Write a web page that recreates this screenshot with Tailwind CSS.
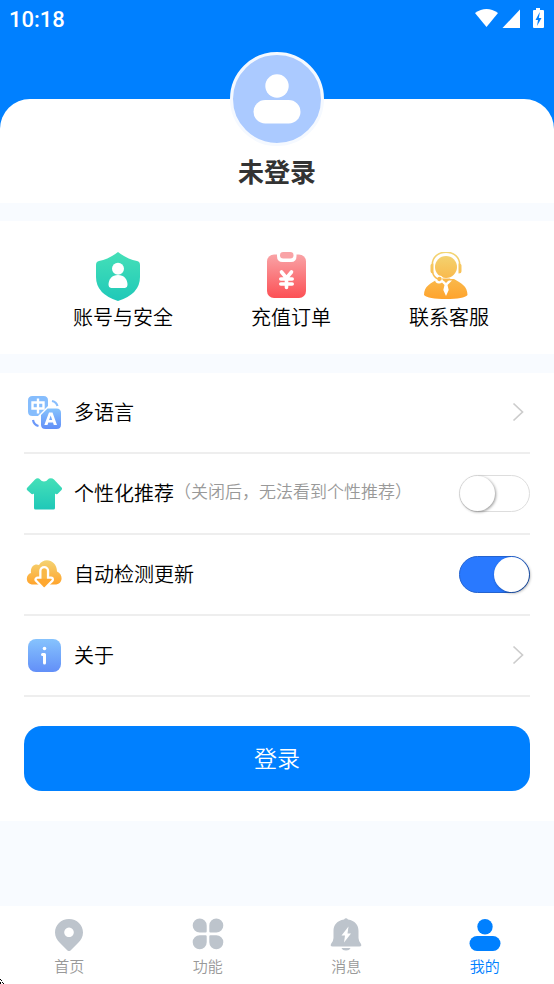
<!DOCTYPE html>
<html lang="zh-CN">
<head>
<meta charset="utf-8">
<meta name="viewport" content="width=device-width, initial-scale=1">
<title>我的</title>
<script src="https://cdn.jsdelivr.net/npm/@tailwindcss/browser@4"></script>
</head>
<body class="flex min-h-screen flex-col bg-[#f8fbff] font-['Noto_Sans_CJK_SC',sans-serif] font-[350] text-black">

<svg class="absolute h-0 w-0" aria-hidden="true">
  <defs>
    <linearGradient id="green" x1="0" y1="0" x2="0" y2="1"><stop offset="0" stop-color="#45e0b8"/><stop offset="1" stop-color="#1fc8b8"/></linearGradient>
    <linearGradient id="red" x1="0" y1="0" x2="0" y2="1"><stop offset="0" stop-color="#f9a3a6"/><stop offset="1" stop-color="#fc5055"/></linearGradient>
    <linearGradient id="gold" x1="0" y1="0" x2="0" y2="1"><stop offset="0" stop-color="#f4d373"/><stop offset="1" stop-color="#ffa42c"/></linearGradient>
    <linearGradient id="agent" gradientUnits="userSpaceOnUse" x1="0" y1="0" x2="0" y2="48"><stop offset="0" stop-color="#f2d675"/><stop offset="1" stop-color="#ffa22b"/></linearGradient>
    <linearGradient id="blue" x1="0" y1="0" x2="0" y2="1"><stop offset="0" stop-color="#86c3fd"/><stop offset="1" stop-color="#628ff8"/></linearGradient>
  </defs>
</svg>

<header class="bg-[#0080ff]">
  <div class="flex h-[99px] items-start justify-between pt-[7px] pl-[9px] pr-[9px]">
    <time class="font-[Roboto,sans-serif] text-[22px] leading-[26px] font-medium text-white">10:18</time>
    <svg class="h-[22px] w-[70px]" viewBox="0 1 70 22" fill="#fff" aria-hidden="true">
      <path d="M0 7Q11.500-1 23 7L11.500 21Z"/>
      <path d="M45 3.500V22H27.500Z"/>
      <path d="M61 2h4v2h3q1 0 1 1v16q0 1-1 1H59q-1 0-1-1V5q0-1 1-1h2Z"/>
      <path d="M64.500 6.500l-4 7.500h2.500l-1 6 4.500-8h-2.700l1-5.500Z" fill="#0080ff"/>
    </svg>
  </div>
  <div class="flex flex-col items-center rounded-t-[30px] bg-white pb-[13px]">
    <div class="-mt-[47px] flex size-[94px] items-center justify-center rounded-full border-[3px] border-[#f5f9ff] bg-[#abcaff]">
      <svg class="h-[50px] w-[48px]" viewBox="0 0 48 50" fill="#fff" aria-hidden="true"><circle cx="24" cy="12" r="11.700"/><rect x=".5" y="26" width="47" height="23.500" rx="11.750"/></svg>
    </div>
    <h1 class="mt-[6px] text-[26px] leading-[38px] font-bold text-[#333]">未登录</h1>
  </div>
</header>

<main>
  <section class="mt-[18px] flex justify-between bg-white pt-[31px] pr-[65px] pb-[22px] pl-[73px]">
    <a href="#" class="flex flex-col items-center text-xl leading-[30px]">
      <svg class="mr-[10px] h-[50px] w-[44px]" viewBox="0 0 44 50" aria-hidden="true"><path d="M22 0Q31 7 41 9 44 9.500 44 13V25Q44 42 22 49 0 42 0 25V13Q0 9.500 3 9 13 7 22 0Z" fill="url(#green)"/><circle cx="22" cy="16.800" r="6" fill="#fff"/><path d="M22 23C28 23 31.500 27 31.500 33Q31.500 35.500 29 36H15Q12.500 35.500 12.500 33C12.500 27 16 23 22 23Z" fill="#fff"/></svg>
      <span>账号与安全</span>
    </a>
    <a href="#" class="flex flex-col items-center text-xl leading-[30px]">
      <svg class="mr-[10px] h-[50px] w-[44px]" viewBox="0 0 44 50" aria-hidden="true"><rect x="3" y="2.500" width="39" height="43.500" rx="7" fill="url(#red)"/><path d="M13 0H32.500V4Q32.500 10 27 10H18.500Q13 10 13 4Z" fill="#fff"/><rect x="16" y="0" width="13.500" height="6.500" rx="3.250" fill="#f9a3a6"/><path d="M17.500 20l5 6 5-6M22.500 26V35.500M16.800 27h11.400M16.800 32h11.400" fill="none" stroke="#fff" stroke-width="3.600" stroke-linecap="round" stroke-linejoin="round"/></svg>
      <span>充值订单</span>
    </a>
    <a href="#" class="flex flex-col items-center text-xl leading-[30px]">
      <svg class="mr-[6px] h-[50px] w-[44px]" viewBox="0 0 44 50" aria-hidden="true"><circle cx="22" cy="15" r="11" fill="url(#agent)"/><path d="M8.300 14C7-4.500 37-4.500 35.700 14" fill="none" stroke="url(#agent)" stroke-width="1.500"/><path d="M6.500 13.500q0-2 3-2v10q-3 0-3-2.500ZM37.500 13.500q0-2-3-2v10q3 0 3-2.500Z" fill="url(#agent)"/><path d="M0 43C0 34 7 31 14 27H30C37 31 43.500 34 43.500 43Q40 47 22 47 4 47 0 43Z" fill="url(#agent)"/><circle cx="15" cy="27.500" r="4" fill="#fff"/><path d="M8.500 20Q9.500 25 14 27" fill="none" stroke="url(#agent)" stroke-width="1.400"/><circle cx="15.500" cy="27" r="2.200" fill="url(#agent)"/><path d="M16 28.500H28L23.500 33 24.700 38 22 44 19.300 38 20.500 33Z" fill="#fff"/><path d="M17.500 26.500H26.500L22 31Z" fill="url(#agent)"/></svg>
      <span>联系客服</span>
    </a>
  </section>

  <section class="mt-[19px] bg-white px-6 pb-[30px]">
    <a href="#" class="flex h-[81px] items-center gap-3 border-b-2 border-[#eee] pb-[2px] pl-[2px]">
      <svg class="size-9 shrink-0" viewBox="0 0 36 36" aria-hidden="true">
        <path d="M6.500 2H17.500Q22 2 22 6.500V12L12 22H6.500Q2 22 2 17.500V6.500Q2 2 6.500 2Z" fill="#86bdfd"/>
        <path d="M21.500 14.500H30.500Q35 14.500 35 19V30.500Q35 35 30.500 35H19.500Q15 35 15 30.500V21Z" fill="url(#blue)"/>
        <path d="M6.500 8.500H17.500V14.500H6.500ZM12 4.500V19.500" fill="none" stroke="#fff" stroke-width="2.400"/>
        <path fill-rule="evenodd" d="M23 18.500H26.500L31 31H27.800L27 28.500H22.300L21.500 31H18.300ZM23.100 26H26.200L24.650 21.500Z" fill="#fff"/>
        <path d="M26 7Q30.500 8 31.500 12" fill="none" stroke="#8abffd" stroke-width="2.200"/>
        <path d="M7 26Q8 31 12.500 32" fill="none" stroke="#6b98f9" stroke-width="2.200"/>
      </svg>
      <span class="text-xl">多语言</span>
      <svg class="mr-[6px] ml-auto h-5 w-3" viewBox="0 0 12 20" fill="none" stroke="#ccc" stroke-width="1.700" aria-hidden="true"><path d="M1.500 1.500L10.500 10 1.500 18.500"/></svg>
    </a>
    <div class="flex h-[81px] items-center border-b-2 border-[#eee] pl-[2px]">
      <label for="personal" class="flex items-center pb-[2px]">
        <svg class="mr-3 size-9 shrink-0" viewBox="0 0 36 36" aria-hidden="true"><path d="M13 3.500Q18 9.500 23 3.500 26 2.500 28 4.500L36 13Q36.300 14 35.500 15L31.500 19Q30 19.500 29 18.500V33Q29 34.500 27.500 34.500H9.500Q8 34.500 8 33V18.500Q7 19.500 5.500 19L1 15Q.5 14 1 13L9 4.500Q11 2.500 13 3.500Z" fill="url(#green)"/></svg>
        <span class="text-xl">个性化推荐</span>
        <span class="pb-[3px] text-[17px] text-[#999]">（关闭后，无法看到个性推荐）</span>
      </label>
      <input id="personal" type="checkbox" role="switch" class="relative ml-auto h-[37px] w-[71px] shrink-0 appearance-none rounded-full border border-[#ddd] bg-white before:absolute before:top-0 before:left-0 before:size-[35px] before:rounded-full before:bg-white before:shadow-[1px_1px_3px_rgba(0,0,0,0.4)] checked:border-[#2463cf] checked:bg-[#2979ff] checked:before:left-[34px]">
    </div>
    <div class="flex h-[81px] items-center border-b-2 border-[#eee] pl-[2px]">
      <label for="update" class="flex items-center pb-[2px]">
        <svg class="mr-3 size-9 shrink-0" viewBox="0 0 36 36" aria-hidden="true"><path d="M8 28.500C-1 29-1 18.500 5 17 4 10.500 9 7 13 9 18 .5 31 4 31 15.500 38 18.500 37 29 28 28.500Z" fill="url(#gold)"/><path d="M18.200 15V24" fill="none" stroke="#fff" stroke-width="10" stroke-linecap="round"/><path d="M11.500 23.500H25L18.200 30Z" fill="#fff" stroke="#fff" stroke-width="6" stroke-linejoin="round"/><path d="M18.200 15V26" stroke="#f9b847" stroke-width="5.400" stroke-linecap="round"/><path d="M11.500 23.500H25L18.200 30.500Z" fill="#fea831" stroke="#fea831" stroke-width="1.500" stroke-linejoin="round"/></svg>
        <span class="text-xl">自动检测更新</span>
      </label>
      <input id="update" type="checkbox" role="switch" checked class="relative ml-auto h-[37px] w-[71px] shrink-0 appearance-none rounded-full border border-[#ddd] bg-white before:absolute before:top-0 before:left-0 before:size-[35px] before:rounded-full before:bg-white before:shadow-[1px_1px_3px_rgba(0,0,0,0.4)] checked:border-[#2463cf] checked:bg-[#2979ff] checked:before:left-[34px]">
    </div>
    <a href="#" class="flex h-[81px] items-center gap-3 border-b-2 border-[#eee] pb-[2px] pl-[2px]">
      <svg class="size-9 shrink-0" viewBox="0 0 36 36" aria-hidden="true"><rect x="2" y="2" width="33" height="33" rx="8" fill="url(#blue)"/><circle cx="18.500" cy="11.500" r="1.800" fill="#fff"/><path d="M16.500 17.500H18.500V26" fill="none" stroke="#fff" stroke-width="3" stroke-linecap="round" stroke-linejoin="round"/></svg>
      <span class="text-xl">关于</span>
      <svg class="mr-[6px] ml-auto h-5 w-3" viewBox="0 0 12 20" fill="none" stroke="#ccc" stroke-width="1.700" aria-hidden="true"><path d="M1.500 1.500L10.500 10 1.500 18.500"/></svg>
    </a>
    <button type="button" class="mt-[29px] h-[65px] w-full rounded-[18px] bg-[#0080ff] pb-[2px] text-[23px] text-white">登录</button>
  </section>
</main>

<nav class="mt-auto grid h-[78px] grid-cols-4 bg-white pt-[10px] text-[15px] leading-[22px] text-[#999]">
  <a href="#" class="flex flex-col items-center gap-[3px]">
    <svg class="size-9" viewBox="0 0 36 36" fill="#bdc4cc" aria-hidden="true"><path fill-rule="evenodd" d="M18 3C26 3 32 9 32 16.500 32 21 30 24 27 27L19.500 34.500Q18 35.500 16.500 34.500L9 27C6 24 4 21 4 16.500 4 9 10 3 18 3ZM18 11.500a4.800 4.800 0 1 0 .01 0Z"/></svg>
    <span>首页</span>
  </a>
  <a href="#" class="flex flex-col items-center gap-[3px]">
    <svg class="size-9" viewBox="0 0 36 36" fill="#bdc4cc" aria-hidden="true"><path d="M9.700 2.500A7 7 0 0 1 16.700 9.500V15.500Q16.700 16.500 15.700 16.500H9.700A7 7 0 0 1 9.700 2.500ZM26.300 2.500A7 7 0 0 1 26.300 16.500H20.300Q19.300 16.500 19.300 15.500V9.500A7 7 0 0 1 26.300 2.500ZM9.700 19.300H15.700Q16.700 19.300 16.700 20.300V26.300A7 7 0 1 1 9.700 19.300ZM20.300 19.300H26.300A7 7 0 1 1 19.300 26.300V20.300Q19.300 19.300 20.300 19.300Z"/></svg>
    <span>功能</span>
  </a>
  <a href="#" class="flex flex-col items-center gap-[3px]">
    <svg class="size-9" viewBox="0 0 36 36" fill="#bdc4cc" aria-hidden="true"><path d="M16 3.500Q18 1 20 3.500C27 4.500 30.500 9 30.500 15V22Q30.500 25 33 28 34 30.500 31.500 30.500H4.500Q2 30.500 3 28 5.500 25 5.500 22V15C5.500 9 9 4.500 16 3.500ZM13.500 32H22.500Q21.500 34.500 18 34.500 14.500 34.500 13.500 32Z"/><path d="M20.500 10.500L13.500 19.500H17L16 26.500 23 17.500H19.500Z" fill="#fff"/></svg>
    <span>消息</span>
  </a>
  <a href="#" aria-current="page" class="flex flex-col items-center gap-[3px] text-[#0080ff]">
    <svg class="size-9" viewBox="0 0 36 36" fill="#0080ff" aria-hidden="true"><circle cx="18" cy="10.700" r="7.700"/><rect x="2.500" y="20" width="31" height="15" rx="7.500"/></svg>
    <span>我的</span>
  </a>
</nav>

<svg class="absolute bottom-0 left-0 h-[5px] w-[5px]" viewBox="0 0 5 5" shape-rendering="crispEdges" aria-hidden="true"><path d="M0 0h1v1H0ZM1 1h1v1H1ZM0 3h1v2H0ZM2 3h1v1H2ZM3 4h1v1H3Z"/></svg>
</body>
</html>
